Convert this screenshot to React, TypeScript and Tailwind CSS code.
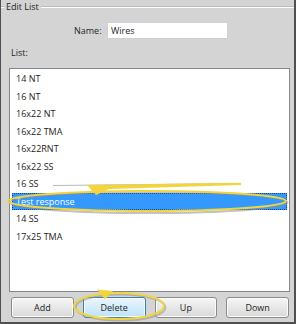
import React from "react";

const items = [
  "14 NT",
  "16 NT",
  "16x22 NT",
  "16x22 TMA",
  "16x22RNT",
  "16x22 SS",
  "16 SS",
  "Test response",
  "14 SS",
  "17x25 TMA",
];

const Btn = ({ label, hot }: { label: string; hot?: boolean }) => (
  <button
    className={
      hot
        ? "h-[21px] rounded-[3px] border border-[#3c7fb1] bg-linear-to-b from-[#eaf6fd] to-[#bde3f8] text-[#1e1e1e] shadow-[inset_0_0_0_1px_#f4fbff]"
        : "h-[21px] rounded-[3px] border border-[#8c8c8c] bg-linear-to-b from-[#f6f6f6] to-[#d9d9d9] text-[#1e1e1e] shadow-[inset_0_0_0_1px_#fbfbfb]"
    }
  >
    {label}
  </button>
);

const Callouts = () => (
  <svg className="absolute inset-0 pointer-events-none" width="296" height="324" viewBox="0 0 296 324">
    {/* list row callout */}
    <path d="M52 185.5 L240 183.5" stroke="#9c9c9c" strokeWidth="1.2" opacity="0.7" />
    <ellipse cx="147.5" cy="202.5" rx="139" ry="10.5" fill="none" stroke="#8f8f8f" strokeWidth="2" opacity="0.55" />
    <ellipse cx="146" cy="201" rx="139" ry="10" fill="none" stroke="#f2d43e" strokeWidth="2" />
    <polygon points="86,185 240,182.8 240,185 108,189 95,195" fill="#f2d43e" />
    {/* delete button callout */}
    <ellipse cx="119.5" cy="307.5" rx="45" ry="13" fill="none" stroke="#8f8f8f" strokeWidth="2" opacity="0.55" />
    <ellipse cx="118" cy="306" rx="45" ry="13" fill="none" stroke="#f2d43e" strokeWidth="2" />
    <polygon points="96,289.5 112,291 104,299.5" fill="#f2d43e" />
  </svg>
);

export default function App() {
  return (
    <div className="relative w-[296px] h-[324px] bg-[#d4d4d4] border-l border-r-2 border-b-2 border-[#505050] font-['Open_Sans',sans-serif] text-[9px] text-[#1e1e1e] overflow-hidden">
      {/* group header */}
      <div className="flex items-center h-[14px]">
        <div className="w-[3px] h-[2px] border-t border-[#bcbcbc] bg-white" />
        <span className="px-[2px] leading-[14px]">Edit List</span>
        <div className="flex-1 h-[2px] border-t border-[#bcbcbc] bg-white" />
      </div>

      <div className="flex items-center mt-[8px] pl-[73px] gap-[7px]">
        <span className="w-[26px] text-right">Name:</span>
        <div className="w-[121px] h-[17px] bg-white border border-[#cdd2d9] px-[3px] flex items-center">Wires</div>
      </div>

      <div className="mt-[8px] pl-[10px] leading-[12px]">List:</div>

      <div className="mt-[9px] ml-[8px] w-[281px] h-[224px] bg-white border border-[#828790] pt-[1px]">
        {items.map((it) => (
          <div
            key={it}
            className={
              it === "Test response"
                ? "h-[17.5px] mx-[2px] pl-[3px] flex items-center bg-[#3399ff] text-white border border-dotted border-[#174a8c]"
                : "h-[17.5px] mx-[2px] pl-[4px] flex items-center"
            }
          >
            {it}
          </div>
        ))}
      </div>

      <div className="grid grid-cols-4 gap-[9px] mt-[5px] ml-[10px] w-[278px]">
        <Btn label="Add" />
        <Btn label="Delete" hot />
        <Btn label="Up" />
        <Btn label="Down" />
      </div>

      <Callouts />
    </div>
  );
}
